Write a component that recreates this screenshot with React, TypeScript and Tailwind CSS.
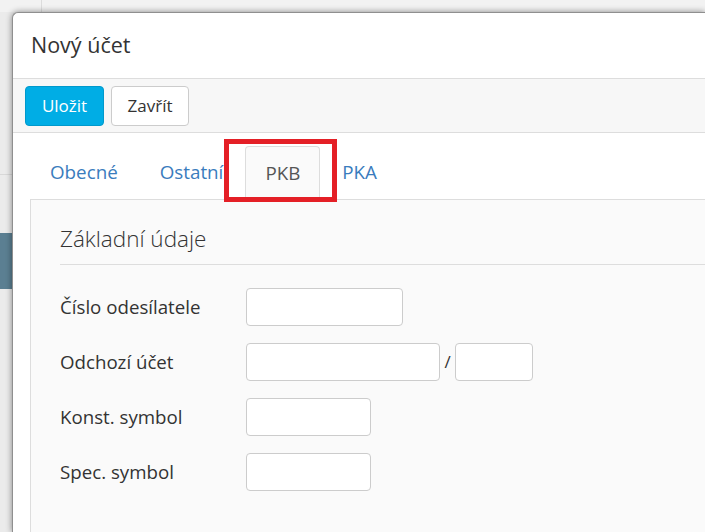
import React from 'react';

const font = { fontFamily: '"Open Sans", "Noto Sans", sans-serif' };

function FormRow({ label, children }: { label: string; children: React.ReactNode }) {
  return (
    <div className="flex items-center h-[38px] mb-[17px]">
      <label className="w-[186px] text-[18.7px] text-[#333]">{label}</label>
      {children}
    </div>
  );
}

function Input({ w }: { w: string }) {
  return <input className={`${w} h-[38px] bg-white border border-[#ccc] rounded-[4px] outline-none`} />;
}

export default function App() {
  return (
    <div className="w-[705px] h-[532px] overflow-hidden bg-[#ececec] flex flex-col" style={font}>
      {/* page behind the dialog */}
      <div className="h-[12px] flex shrink-0 bg-[#f2f2f2]">
        <div className="w-[42px] border-r border-[#dcdcdc]" />
      </div>
      <div className="flex flex-1 min-h-0">
        <div className="w-[12px] shrink-0 flex flex-col bg-[#ebebeb]">
          <div className="h-[163px] border-b border-[#d8d8d8]" />
          <div className="h-[58px]" />
          <div className="h-[56px] bg-[#5b7f92]" />
        </div>

        {/* dialog */}
        <div className="relative flex-1 min-w-0 bg-white rounded-tl-[6px] border-l border-t border-[#8f8f8f] shadow-[0_0_6px_rgba(0,0,0,0.45)] flex flex-col">
          <div className="h-[66px] flex items-center pl-[18px] border-b border-[#ddd] shrink-0">
            <h1 className="text-[21.5px] text-[#333]">Nový účet</h1>
          </div>

          <div className="h-[54px] bg-[#f7f7f7] border-b border-[#ddd] flex items-center gap-[7px] pl-[12px] shrink-0">
            <button className="w-[79px] h-[40px] rounded-[4px] bg-[#00ade5] border border-[#0099cc] text-white text-[17px]">
              Uložit
            </button>
            <button className="w-[78px] h-[40px] rounded-[4px] bg-white border border-[#ccc] text-[#333] text-[17px]">
              Zavřít
            </button>
          </div>

          {/* tabs */}
          <div className="pl-[17px] pt-[13px] flex items-end h-[66px] shrink-0">
            <div className="flex gap-[2px] h-[53px] items-stretch">
              <a className="px-[19px] flex items-center text-[18.8px] text-[#3a7cbd] border border-transparent">Obecné</a>
              <a className="px-[19px] flex items-center text-[18.8px] text-[#3a7cbd] border border-transparent">Ostatní</a>
              <a className="px-[19px] flex items-center text-[18.8px] text-[#555] bg-[#fafafa] border border-[#ddd] border-b-[#fafafa] rounded-t-[4px] mb-[-1px] relative z-10">PKB</a>
              <a className="px-[19px] flex items-center text-[18.8px] text-[#3a7cbd] border border-transparent">PKA</a>
            </div>
          </div>

          {/* content panel */}
          <div className="ml-[17px] flex-1 bg-[#fafafa] border-l border-t border-[#ddd] pl-[29px] pt-[24px]">
            <h2 className="text-[22.5px] font-light text-[#333] leading-[30px] pb-[10px] border-b border-[#ddd]">
              Základní údaje
            </h2>
            <div className="pt-[23px]">
              <FormRow label="Číslo odesílatele">
                <Input w="w-[157px]" />
              </FormRow>
              <FormRow label="Odchozí účet">
                <Input w="w-[194px]" />
                <span className="w-[15px] text-center text-[17px] text-[#333]">/</span>
                <Input w="w-[78px]" />
              </FormRow>
              <FormRow label="Konst. symbol">
                <Input w="w-[125px]" />
              </FormRow>
              <FormRow label="Spec. symbol">
                <Input w="w-[125px]" />
              </FormRow>
            </div>
          </div>

          {/* annotation box */}
          <div className="absolute left-[211px] top-[126px] w-[113px] h-[63px] border-[5px] border-[#e41f26] z-20 pointer-events-none" />
        </div>
      </div>
    </div>
  );
}
